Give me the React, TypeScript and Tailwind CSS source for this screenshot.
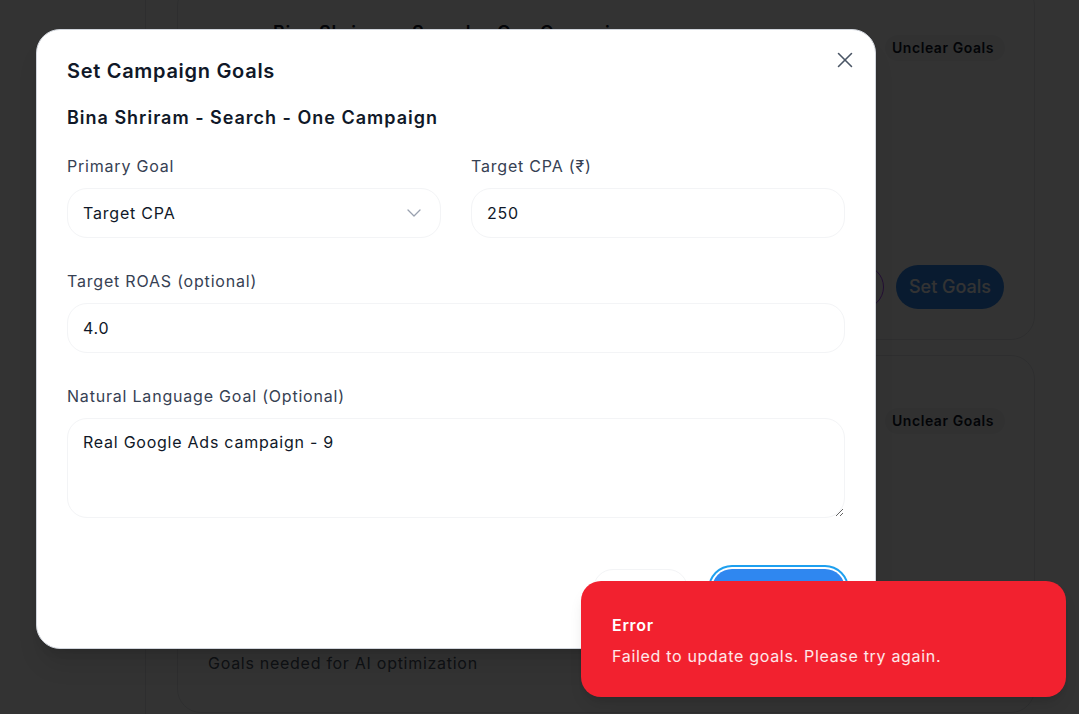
import { ChevronDown, X, Target } from "lucide-react";

function CampaignCard({ title, note, showActions }: { title?: string; note?: string; showActions?: boolean }) {
  return (
    <div className="flex h-[358px] shrink-0 flex-col rounded-[24px] border border-gray-200 bg-white p-[30px] tracking-[0.045em]">
      <div className="flex items-start justify-between">
        <div className="flex items-start gap-[17px]">
          <div className="mt-[22px] flex h-[48px] w-[48px] items-center justify-center rounded-xl bg-blue-50 text-blue-600">
            <Target size={22} />
          </div>
          {title && (
            <div className="mt-[6px]">
              <p className="text-lg font-semibold leading-7 text-gray-900">{title}</p>
              <p className="text-sm text-gray-500">Search · Enabled</p>
            </div>
          )}
        </div>
        <span className="-mr-[1px] mt-[22px] rounded-full bg-gray-100 py-[3px] pl-[7px] pr-[11px] text-sm font-semibold tracking-[0.04em] text-gray-900">Unclear Goals</span>
      </div>
      <div className="flex-1" />
      {showActions && (
        <div className="flex justify-end gap-[12px]">
          <button className="h-[44px] rounded-full border border-purple-500 px-[18px] text-lg font-medium text-purple-600">AI Suggest</button>
          <button className="h-[44px] w-[108px] rounded-full bg-[#2f87f0] text-lg font-medium tracking-normal text-white">Set Goals</button>
        </div>
      )}
      {note && <p className="mb-[7px] text-base leading-6 text-gray-600">{note}</p>}
    </div>
  );
}

export default function App() {
  return (
    <div className="relative h-[714px] w-full overflow-hidden bg-white font-['Inter',sans-serif]">
      <div className="flex h-full">
        <aside className="w-[146px] shrink-0 border-r border-gray-200" />
        <main className="-mt-[18px] flex flex-1 flex-col gap-[15px] pl-[31px] pr-[44px]">
          <CampaignCard title="Bina Shriram - Search - One Campaign" showActions />
          <CampaignCard note="Goals needed for AI optimization" />
        </main>
      </div>

      <div className="absolute inset-0 bg-black/80" />

      <div className="absolute left-[36px] top-[29px] h-[620px] w-[840px] rounded-[24px] border border-gray-300 bg-white px-[30px] pt-[27px] shadow-xl">
        <button className="absolute right-[17px] top-[17px] text-gray-600">
          <X size={26} strokeWidth={1.4} />
        </button>
        <h2 className="text-xl font-semibold leading-7 tracking-[0.035em] text-gray-900">Set Campaign Goals</h2>
        <h3 className="mt-[19px] text-lg font-semibold leading-7 tracking-[0.055em] text-gray-900">Bina Shriram - Search - One Campaign</h3>

        <div className="mt-[22px] grid grid-cols-2 gap-x-[30px]">
          <div>
            <label className="block text-base leading-6 tracking-[0.05em] text-gray-700">Primary Goal</label>
            <div className="mt-[10px] flex h-[50px] items-center justify-between rounded-[20px] border border-gray-100 pl-[15px] pr-[14px] text-base tracking-[0.05em] text-gray-900">
              <span>Target CPA</span>
              <ChevronDown size={24} strokeWidth={1.3} className="text-gray-400" />
            </div>
          </div>
          <div>
            <label className="block text-base leading-6 tracking-[0.05em] text-gray-700">Target CPA (₹)</label>
            <input
              defaultValue="250"
              className="mt-[10px] h-[50px] w-full rounded-[20px] border border-gray-100 px-[15px] text-base tracking-[0.05em] text-gray-900 outline-none"
            />
          </div>
        </div>

        <div className="mt-[31px]">
          <label className="block text-base leading-6 tracking-[0.05em] text-gray-700">Target ROAS (optional)</label>
          <input
            defaultValue="4.0"
            className="mt-[10px] h-[50px] w-full rounded-[20px] border border-gray-100 px-[15px] text-base tracking-[0.05em] text-gray-900 outline-none"
          />
        </div>

        <div className="mt-[31px]">
          <label className="block text-base leading-6 tracking-[0.05em] text-gray-700">Natural Language Goal (Optional)</label>
          <textarea
            defaultValue="Real Google Ads campaign - 9"
            className="mt-[10px] block h-[100px] w-full rounded-[20px] border border-gray-100 px-[15px] py-[11px] text-base leading-6 tracking-[0.047em] text-gray-900 outline-none"
          />
        </div>

        <div className="mt-[51px] flex justify-end gap-[24px]">
          <button className="h-[48px] w-[95px] rounded-[20px] border border-gray-100 text-base font-medium text-gray-700">Cancel</button>
          <button className="h-[48px] w-[133px] rounded-[20px] bg-[#2f87f0] text-base font-medium text-white ring-2 ring-[#1ea0ef] ring-offset-2">Save Goals</button>
        </div>
      </div>

      <div className="absolute left-[581px] top-[581px] h-[116px] w-[485px] rounded-[20px] bg-[#f2212f] pl-[31px] pt-[32px] tracking-[0.043em] shadow-lg">
        <p className="text-base font-semibold leading-6 text-white">Error</p>
        <p className="mt-[7px] text-base leading-6 text-white/90">Failed to update goals. Please try again.</p>
      </div>
    </div>
  );
}
